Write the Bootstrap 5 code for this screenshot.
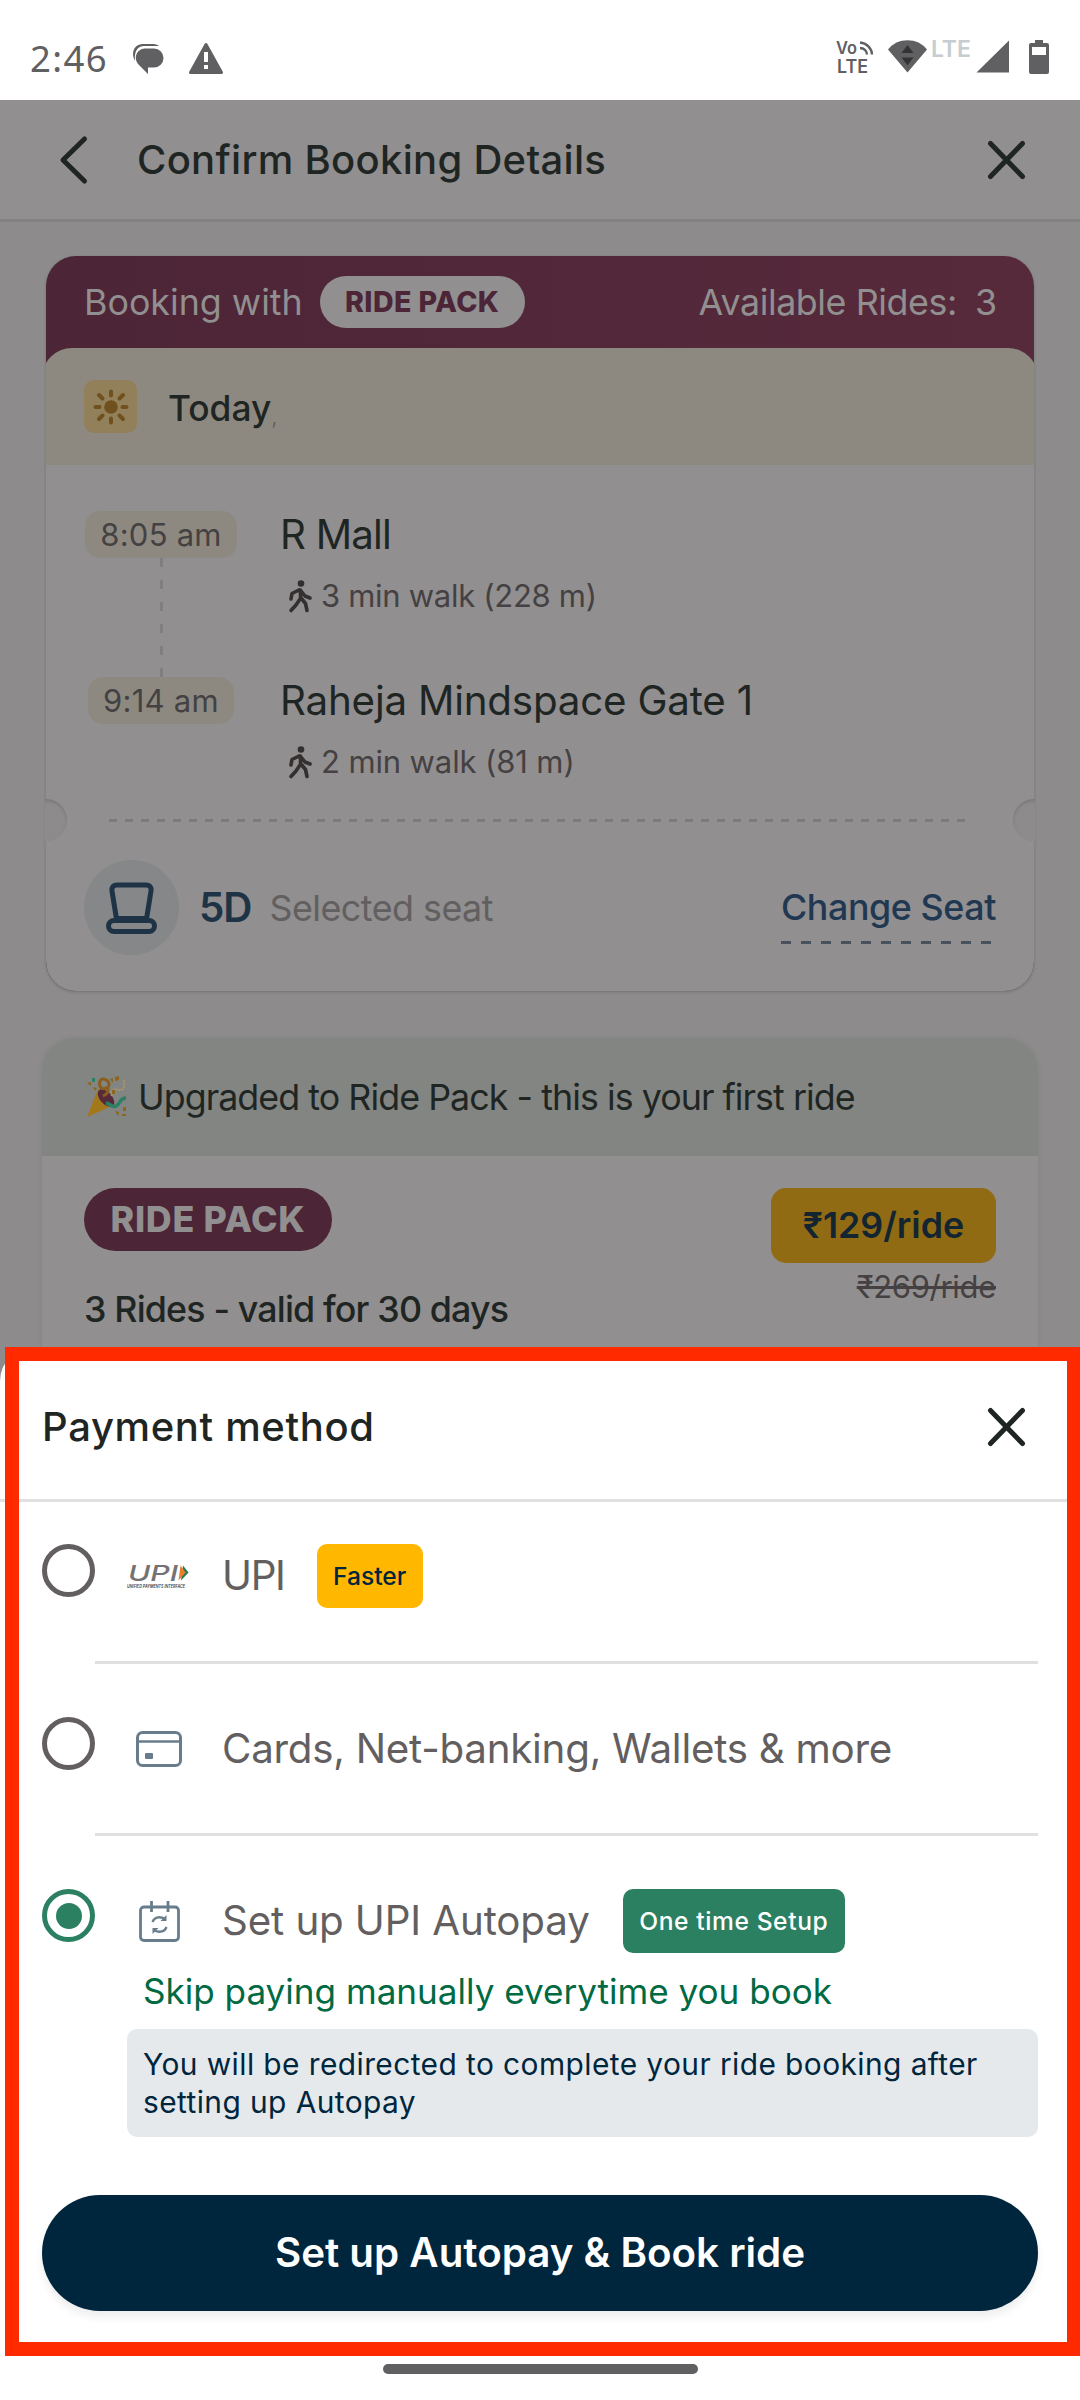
<!DOCTYPE html>
<html lang="en">
<head>
<meta charset="utf-8">
<meta name="viewport" content="width=device-width, initial-scale=1">
<title>Confirm Booking Details</title>
<link href="https://cdn.jsdelivr.net/npm/bootstrap@5.3.0/dist/css/bootstrap.min.css" rel="stylesheet">
<style>
  body{margin:0;font-family:Inter,"Noto Sans",sans-serif;background:#8d8b8b;color:#1f2522}
  svg{display:block;flex:none;overflow:visible}
  .screen{width:1080px;height:2400px;background:#8d8b8b}
  .cut{white-space:nowrap}
  .statusbar{height:100px;background:#fff;padding:0 31px 0 30px;color:#606062}
  .clock{font:400 36.5px/40px "Noto Sans",sans-serif;margin-top:38px;letter-spacing:1.4px}
  .appbar{height:122px;background:#918f90;border-bottom:3px solid #838282;padding:0 55px 0 60px}
  .t-title{font-size:40px;line-height:47px;font-weight:540}
  .t-lg{font-size:40.3px;line-height:47px}
  .t-md{font-size:35.8px;line-height:44px}
  .t-sm{font-size:31px;line-height:32px}

  .trip{margin:34px 46px 0;height:735px;border-radius:30px;background:linear-gradient(90deg,#4c2537,#572a3b);box-shadow:0 1px 3px #6f7473}
  .trip-clip{height:100%;border-radius:30px}
  .trip-head{height:92px;padding:0 37px 0 38px;color:#918f90}
  .pack-light{width:205px;height:52px;margin-left:17px;background:#918f90;color:#4c2537;font-size:28.6px;font-weight:800;line-height:52px;letter-spacing:.4px}
  .day{margin:0 -4px;height:117px;border-radius:30px 30px 0 0;background:#8e8980;padding-left:42px}
  .sunbox{width:53px;height:53px;border-radius:10px;background:#91805a}
  .trip-body{height:526px;background:#918f90;padding:46px 38px 0}
  .stop-row{height:166px}
  .stop-row.last{height:142px}
  .time-col{width:154px}
  .time-pill{height:47px;border-radius:15px;background:#8e8980;color:#444142;font-size:31px;line-height:47px;padding:0 15px;letter-spacing:.25px}
  .thread{width:3px;flex:1;background:repeating-linear-gradient(#7e7f7e 0 9px,transparent 9px 22px)}
  .stop-info{margin-left:42px}
  .walk{margin-top:22px;color:#454142;padding-left:8px;gap:9px}
  .tear{height:3px;margin:0 30px 0 25px;background:repeating-linear-gradient(90deg,#7a7b7b 0 8px,transparent 8px 16px)}
  .notch{width:42px;height:42px;top:543px;border-radius:50%;background:#8d8b8b;box-shadow:inset 0 2px 3px #787a7a}
  .notch.l{left:-21px;clip-path:inset(0 0 0 20px)}
  .notch.r{right:-21px;clip-path:inset(0 20px 0 0)}
  .seat-row{height:168px;padding-top:38px}
  .seat-dot{width:95px;height:95px;border-radius:50%;background:#858789}
  .swap{color:#213852;font-weight:500;letter-spacing:-.4px}
  .swap::after{content:"";display:block;height:3px;margin:12px 1px 0 0;background:repeating-linear-gradient(90deg,#47525e 0 10px,transparent 10px 20px)}

  .offer{margin:47px 42px 0;height:400px;border-radius:32px 32px 0 0;background:#918f90;box-shadow:0 0 4px #858384}
  .offer-head{height:118px;background:#838582;padding-left:44px;gap:11px}
  .offer-body{padding:32px 42px 0}
  .pack-dark{width:248px;height:63px;background:#4c2536;color:#918f90;font-size:35.8px;font-weight:800;line-height:63px;letter-spacing:.7px}
  .price{width:225px;height:75px;border-radius:15px;background:#906b13;color:#122531;font-size:35.8px;line-height:75px;font-weight:600}

  .sheet{left:0;right:0;top:1347px;height:1053px;border-radius:34px 34px 0 0;background:#fff;color:#1f2522}
  .sheet-head{height:155px;padding:7px 55px 0 42px;border-bottom:3px solid #e1e1e1}
  .choice{padding:0 42px;height:160px}
  .choice .line{height:64px}
  .radio{width:53px;height:53px;border:5.5px solid #635f60;border-radius:50%}
  .radio.on{border-color:#2c8062}
  .radio.on::after{content:"";width:26px;height:26px;border-radius:50%;background:#2c8062}
  .brand{width:64px;margin:0 31px 0 32px;height:64px}
  .rule{height:3px;margin:0 42px 0 95px;background:#e0e0e0}
  .tag{height:64px;border-radius:10px;font-size:24.6px;font-weight:540;line-height:64px;text-align:center}
  .txt-mute{color:#635f60}
  .hint{margin:15px 42px 0 127px;border-radius:10px;background:#e6e9ec;color:#00263e;height:108px;padding:16px 16px 0;font-size:29.9px;line-height:38px;letter-spacing:.42px}
  .cta{margin:58px 42px 0;height:116px;border-radius:58px;background:#00263e;color:#fff;font-size:40.3px;font-weight:600;width:996px;border:0;padding:0;box-shadow:0 6px 8px rgba(0,0,0,.07)}
  .homebar{width:315px;height:10px;border-radius:5px;background:#606062;margin:53px auto 0}
  .frame{left:5px;top:1347px;width:1082px;height:1009px;border:14.5px solid #ff2a00;border-right-width:20px;pointer-events:none}
</style>
</head>
<body>
<div class="screen position-relative overflow-hidden cut">

  <div class="statusbar d-flex justify-content-between">
    <div class="d-flex">
      <span class="clock">2:46</span>
      <svg class="ms-4" style="margin-top:43px" width="32" height="32" viewBox="0 0 32 32"><path d="M3 18C-1 11 1 2 10 1h11c3 0 5 1 6 2H12C6 3 2 8 3 18z" fill="#606062"/><path d="M13 5.500h9a9.300 9.300 0 0 1 0 19h-6V31L7 22C1 16 4 6 13 5.500z" fill="#606062"/></svg>
      <svg style="margin:43px 0 0 25px" width="34" height="31" viewBox="0 0 34 31"><path d="M17 1.500L32.500 29.500H1.500z" fill="#606062" stroke="#606062" stroke-width="3" stroke-linejoin="round"/><path d="M15 9h4v10h-4zM15 22h4v4h-4z" fill="#fff"/></svg>
    </div>
    <svg style="margin-top:40px" width="212" height="34" viewBox="0 0 212 34" font-family="Inter">
      <g fill="#606062" font-weight="600"><text x="-1" y="14" font-size="17" textLength="21" lengthAdjust="spacingAndGlyphs">Vo</text><text x="0" y="32.500" font-size="18" textLength="31" lengthAdjust="spacingAndGlyphs">LTE</text></g>
      <path d="M23 2.500a13 12.500 0 0 1 12 12M23 8a7 6.500 0 0 1 7 6.500" fill="none" stroke="#606062" stroke-width="2.400"/>
      <path d="M51 9.500c9-12.500 30-12.500 39 0L70.500 32.500z" fill="#606062"/><path d="M64.500 13l6-8 6 8zM64.500 17.500l6 8 6-8z" fill="#333"/>
      <text x="94" y="17" font-size="22.500" font-weight="600" fill="#c5cdd0" textLength="40" lengthAdjust="spacingAndGlyphs">LTE</text>
      <path d="M172 .5V32.500H139.500z" fill="#606062"/>
      <path d="M198 0h8v3h4a2 2 0 0 1 2 2v27a2 2 0 0 1-2 2h-16a2 2 0 0 1-2-2V5a2 2 0 0 1 2-2h4z" fill="#606062"/><path d="M195 7h14v8h-14z" fill="#fff"/>
    </svg>
  </div>

  <nav class="appbar d-flex align-items-center">
    <svg width="28" height="48" viewBox="0 0 28 48"><path d="M24.500 3L3 24l21.500 21" fill="none" stroke="#1f2522" stroke-width="5" stroke-linecap="round" stroke-linejoin="round"/></svg>
    <span class="t-title" style="margin-left:49px;letter-spacing:.3px">Confirm Booking Details</span>
    <svg class="ms-auto" width="37" height="38" viewBox="0 0 37 38"><path d="M2.500 2.500l32 33M34.500 2.500l-32 33" stroke="#1f2522" stroke-width="5" stroke-linecap="round"/></svg>
  </nav>

  <section class="trip position-relative">
    <div class="trip-clip overflow-hidden">
      <div class="trip-head d-flex align-items-center t-md">
        <span>Booking with</span>
        <span class="pack-light rounded-pill text-center">RIDE PACK</span>
        <span class="ms-auto" style="letter-spacing:-.42px">Available Rides:</span><span style="margin-left:18px">3</span>
      </div>
      <div class="day d-flex align-items-center">
        <span class="sunbox d-flex align-items-center justify-content-center">
          <svg width="36" height="36" viewBox="-18 -18 36 36"><circle r="6.800" fill="#70501d"/><path d="M0-11.500v-4M0 11.500v4M11.500 0h4M-11.500 0h-4M8.500 8.500l3.500 3.500M-8.500-8.500l-3.500-3.500M8.500-8.500l3.500-3.500M-8.500 8.500l-3.500 3.500" stroke="#70501d" stroke-width="4" stroke-linecap="round"/></svg>
        </span>
        <span class="t-md" style="margin:5px 0 0 31px;font-weight:540;font-size:35.300px">Today</span><span style="font-size:22px;line-height:44px;margin-top:18px;color:#5c5b58;font-weight:300">,</span>
      </div>
      <div class="trip-body">
        <div class="stop-row d-flex">
          <div class="time-col d-flex flex-column align-items-center"><span class="time-pill">8:05 am</span><span class="thread"></span></div>
          <div class="stop-info">
            <div class="t-lg" style="letter-spacing:-.8px">R Mall</div>
            <div class="walk d-flex t-sm"><svg width="24" height="32" viewBox="0 0 24 32"><circle cx="13" cy="3.500" r="3.300" fill="#33302f"/><path d="M12.500 10v9M11 10L4 13.500 3 19M13 11l4 5 5 2M12 19l-4 6-5 5.500M13 18l4.500 5.500 1.500 7" fill="none" stroke="#33302f" stroke-width="3.600" stroke-linecap="round" stroke-linejoin="round"/></svg><span style="letter-spacing:-.3px">3 min walk (228 m)</span></div>
          </div>
        </div>
        <div class="stop-row last d-flex">
          <div class="time-col d-flex flex-column align-items-center"><span class="time-pill">9:14 am</span></div>
          <div class="stop-info">
            <div class="t-lg" style="letter-spacing:-.2px">Raheja Mindspace Gate 1</div>
            <div class="walk d-flex t-sm"><svg width="24" height="32" viewBox="0 0 24 32"><circle cx="13" cy="3.500" r="3.300" fill="#33302f"/><path d="M12.500 10v9M11 10L4 13.500 3 19M13 11l4 5 5 2M12 19l-4 6-5 5.500M13 18l4.500 5.500 1.500 7" fill="none" stroke="#33302f" stroke-width="3.600" stroke-linecap="round" stroke-linejoin="round"/></svg><span style="letter-spacing:-.12px">2 min walk (81 m)</span></div>
          </div>
        </div>
        <div class="tear"></div>
        <div class="seat-row d-flex">
          <span class="seat-dot d-flex align-items-center justify-content-center">
            <svg width="51" height="52" viewBox="0 0 51 52" fill="none" stroke="#1f3347" stroke-width="5" stroke-linejoin="round"><path d="M10.500 37L6 9c-.6-4 1.500-6 5-6h29c3.500 0 5.600 2 5 6l-4.500 28"/><rect x="2.500" y="38.500" width="46" height="11" rx="5.500"/><path d="M11 37.500h29" stroke-width="7"/></svg>
          </span>
          <span class="t-lg" style="margin:24px 0 0 20px;color:#1f3347;letter-spacing:-1px;font-weight:600">5D</span>
          <span class="t-md" style="margin:26px 0 0 18px;color:#625f60;letter-spacing:-.5px">Selected seat</span>
          <span class="swap t-md ms-auto" style="margin-top:25px">Change Seat</span>
        </div>
      </div>
    </div>
    <span class="notch l position-absolute"></span><span class="notch r position-absolute"></span>
  </section>

  <section class="offer overflow-hidden">
    <div class="offer-head d-flex align-items-center t-md">
      <svg width="41" height="42" viewBox="0 0 41 42"><path d="M1 41L12 13c6 3 12 9 16 16z" fill="#a3781b"/><ellipse cx="20" cy="22" rx="6" ry="10.500" transform="rotate(-42 20 22)" fill="#572a3b"/><path d="M17 20c8-4 3-6 6-11 1-4-7-9-9-4-2 6 3 10 7 6" fill="none" stroke="#8a5f1e" stroke-width="3"/><path d="M20 27c5 1 6 5 10 3 5-2 3-8 10-8" fill="none" stroke="#2d8066" stroke-width="3.600"/><path d="M26 20c-2-6 3-8 7-6 5 1 7-5 4-11" fill="none" stroke="#a9946d" stroke-width="2" stroke-dasharray="2 1"/><path d="M6 2h3v4H6z" fill="#2d8066"/><path d="M1 7l4-1v4zM7 11l4 1-2 3zM24 3l3-1v5zM29 1l4-1v4l-4 1zM26 14h3v4h-3zM37 31h3v4h-3zM29 35l4 1-1 4zM36 38h4v2h-4z" fill="#8c661b"/></svg>
      <span style="letter-spacing:-.95px">Upgraded to Ride Pack - this is your first ride</span>
    </div>
    <div class="offer-body d-flex justify-content-between">
      <div>
        <div class="pack-dark rounded-pill text-center">RIDE PACK</div>
        <div class="t-md" style="margin-top:36px;font-weight:500;letter-spacing:-.85px">3 Rides - valid for 30 days</div>
      </div>
      <div class="text-end">
        <div class="price text-center">₹129/ride</div>
        <div class="t-sm text-decoration-line-through" style="margin-top:8px;color:#454142;letter-spacing:-.3px">₹269/ride</div>
      </div>
    </div>
  </section>

  <section class="sheet position-absolute">
    <div class="sheet-head d-flex align-items-center justify-content-between">
      <span class="t-title" style="letter-spacing:.65px">Payment method</span>
      <svg width="37" height="38" viewBox="0 0 37 38"><path d="M2.500 2.500l32 33M34.500 2.500l-32 33" stroke="#1f2522" stroke-width="5" stroke-linecap="round"/></svg>
    </div>

    <div class="choice" style="height:159px;padding-top:42px">
      <div class="line d-flex">
        <span class="radio"></span>
        <span class="brand d-flex align-items-center">
          <svg width="61" height="24" viewBox="0 0 61 24"><text x="1" y="17" font-family="Inter" font-size="22" font-style="italic" font-weight="500" fill="#747272" textLength="50" lengthAdjust="spacingAndGlyphs">UPI</text><path d="M56 1.500l5.500 7-7.500 8z" fill="#1f8054"/><path d="M53.500 1.500l5 7-7 8z" fill="#ee7c2c"/><text x="0" y="23.500" font-family="Inter" font-size="4.400" font-style="italic" font-weight="600" fill="#3a4347" textLength="58" lengthAdjust="spacingAndGlyphs">UNIFIED PAYMENTS INTERFACE</text></svg>
        </span>
        <span class="t-lg txt-mute" style="line-height:64px;letter-spacing:-1.300px">UPI</span>
        <span class="tag" style="margin-left:32px;width:106px;background:#ffb700;color:#00263e">Faster</span>
      </div>
    </div>
    <div class="rule"></div>
    <div class="choice" style="height:169px;padding-top:53px">
      <div class="line d-flex">
        <span class="radio"></span>
        <span class="brand d-flex align-items-center justify-content-center">
          <svg width="46" height="36" viewBox="0 0 46 36"><rect x="1.500" y="1.500" width="43" height="33" rx="5" fill="none" stroke="#687d8b" stroke-width="3"/><path d="M2 10.500h42" stroke="#687d8b" stroke-width="2.500"/><rect x="9" y="22" width="8" height="6" rx="1" fill="#687d8b"/></svg>
        </span>
        <span class="t-lg txt-mute" style="line-height:64px;letter-spacing:-.25px">Cards, Net-banking, Wallets &amp; more</span>
      </div>
    </div>
    <div class="rule"></div>
    <div class="choice" style="height:113px;padding-top:53px">
      <div class="line d-flex">
        <span class="radio on d-flex align-items-center justify-content-center"></span>
        <span class="brand d-flex align-items-center justify-content-center">
          <svg width="41" height="41" viewBox="0 0 41 41" fill="none" stroke="#687d8b" stroke-width="2.800"><rect x="1.500" y="6" width="38" height="33.500" rx="3.500"/><path d="M12.500 0v11M29 0v11"/><g stroke-width="2.300"><path d="M13.500 21c2-5.500 9-6 13-2.500M27.500 26c-2 5.500-9 6-13 2.500"/><path d="M27.500 14v6h-6zM13.500 33v-6h6z" fill="#687d8b" stroke="none"/></g></svg>
        </span>
        <span class="t-lg txt-mute" style="line-height:64px;letter-spacing:-.12px">Set up UPI Autopay</span>
        <span class="tag" style="margin-left:33px;width:222px;background:#2c8062;color:#fff;letter-spacing:.6px">One time Setup</span>
      </div>
    </div>
    <div style="margin:19px 0 0 143px;color:#006a43;font-size:35.100px;line-height:46px">Skip paying manually everytime you book</div>
    <div class="hint">You will be redirected to complete your ride booking after<br>setting up Autopay</div>
    <button class="cta d-block" type="button">Set up Autopay &amp; Book ride</button>
    <div class="homebar"></div>
  </section>
  <div class="frame position-absolute"></div>
</div>
<script src="https://cdn.jsdelivr.net/npm/bootstrap@5.3.0/dist/js/bootstrap.bundle.min.js"></script>
</body>
</html>
